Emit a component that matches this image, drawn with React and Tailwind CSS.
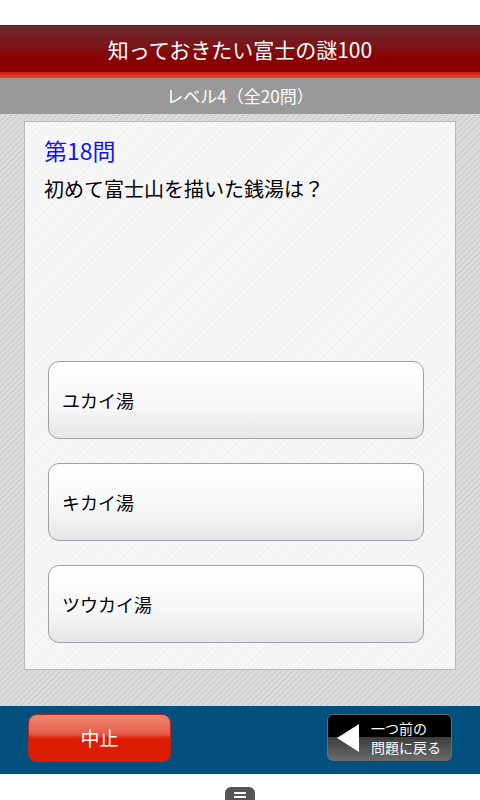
import React from "react";

const font = { fontFamily: '"Noto Sans CJK JP", "Noto Sans", sans-serif' };

function Choice({ label }) {
  return (
    <button className="flex h-[78px] w-[376px] items-center rounded-[11px] border border-[#9ca1a8] bg-[linear-gradient(#ffffff,#f6f6f6_60%,#e6e6e6)] pl-[13px] text-left text-[18px] text-black">
      {label}
    </button>
  );
}

export default function App() {
  return (
    <div className="flex h-[800px] w-[480px] flex-col bg-white" style={font}>
      <div className="h-[25px] shrink-0 bg-white"></div>

      <header className="flex h-[47px] shrink-0 items-center justify-center border-t border-[#8a0808] bg-[linear-gradient(#6a2a30,#7c1418_45%,#8a0000_70%,#8a0000)] pt-[2px] text-[21px] text-white">
        知っておきたい富士の謎100
      </header>
      <div className="h-[6px] shrink-0 bg-[linear-gradient(#c8200e,#e8452e)]"></div>

      <div className="flex h-[36px] shrink-0 items-center justify-center bg-[#999999] text-[17px] text-white">
        レベル4（全20問）
      </div>

      <main className="flex h-[592px] shrink-0 flex-col bg-[repeating-linear-gradient(135deg,#d2d2d2_0,#d2d2d2_2px,#dddddd_2px,#dddddd_4px)] px-[24px] pt-[7px]">
        <section className="flex h-[549px] w-[432px] flex-col border border-[#b8b8b8] bg-[repeating-linear-gradient(135deg,#f3f3f3_0,#f3f3f3_2px,#f7f7f7_2px,#f7f7f7_4px)] px-[19px]">
          <h2 className="mt-[12px] text-[23px] leading-[32px] text-[#1414f0]">第18問</h2>
          <p className="mt-[8px] text-[20px] leading-[30px] text-black">初めて富士山を描いた銭湯は？</p>
          <div className="mt-[157px] flex flex-col gap-[24px] pl-[4px]">
            <Choice label="ユカイ湯" />
            <Choice label="キカイ湯" />
            <Choice label="ツウカイ湯" />
          </div>
        </section>
      </main>

      <footer className="flex h-[68px] shrink-0 items-start justify-between bg-[#02507e] pl-[28px] pr-[28px] pt-[8px]">
        <button className="flex h-[48px] w-[143px] items-center justify-center rounded-[9px] border border-[#b8281a] bg-[linear-gradient(#f08672,#e4604a_40%,#dc1c00_52%,#dd1e02)] text-[19px] text-white">
          中止
        </button>
        <button className="flex h-[47px] w-[125px] items-center overflow-hidden rounded-[6px] border border-[#6a6a6a] bg-[linear-gradient(#000000,#000000_48%,#3c3c3c_50%,#6a6a6a)] pl-[9px] text-white">
          <svg width="22" height="28" viewBox="0 0 22 28">
            <polygon points="22,0 22,28 0,14" fill="#ffffff" />
          </svg>
          <span className="ml-[12px] flex flex-col text-left text-[14px] leading-[19px]">
            <span>一つ前の</span>
            <span>問題に戻る</span>
          </span>
        </button>
      </footer>

      <div className="flex flex-1 items-start justify-center bg-white pt-[13px]">
        <div className="flex h-[14px] w-[30px] flex-col items-center justify-center gap-[2px] rounded-t-[6px] bg-[#555555] pt-[2px]">
          <span className="h-[2px] w-[12px] bg-white"></span>
          <span className="h-[2px] w-[12px] bg-white"></span>
        </div>
      </div>
    </div>
  );
}
